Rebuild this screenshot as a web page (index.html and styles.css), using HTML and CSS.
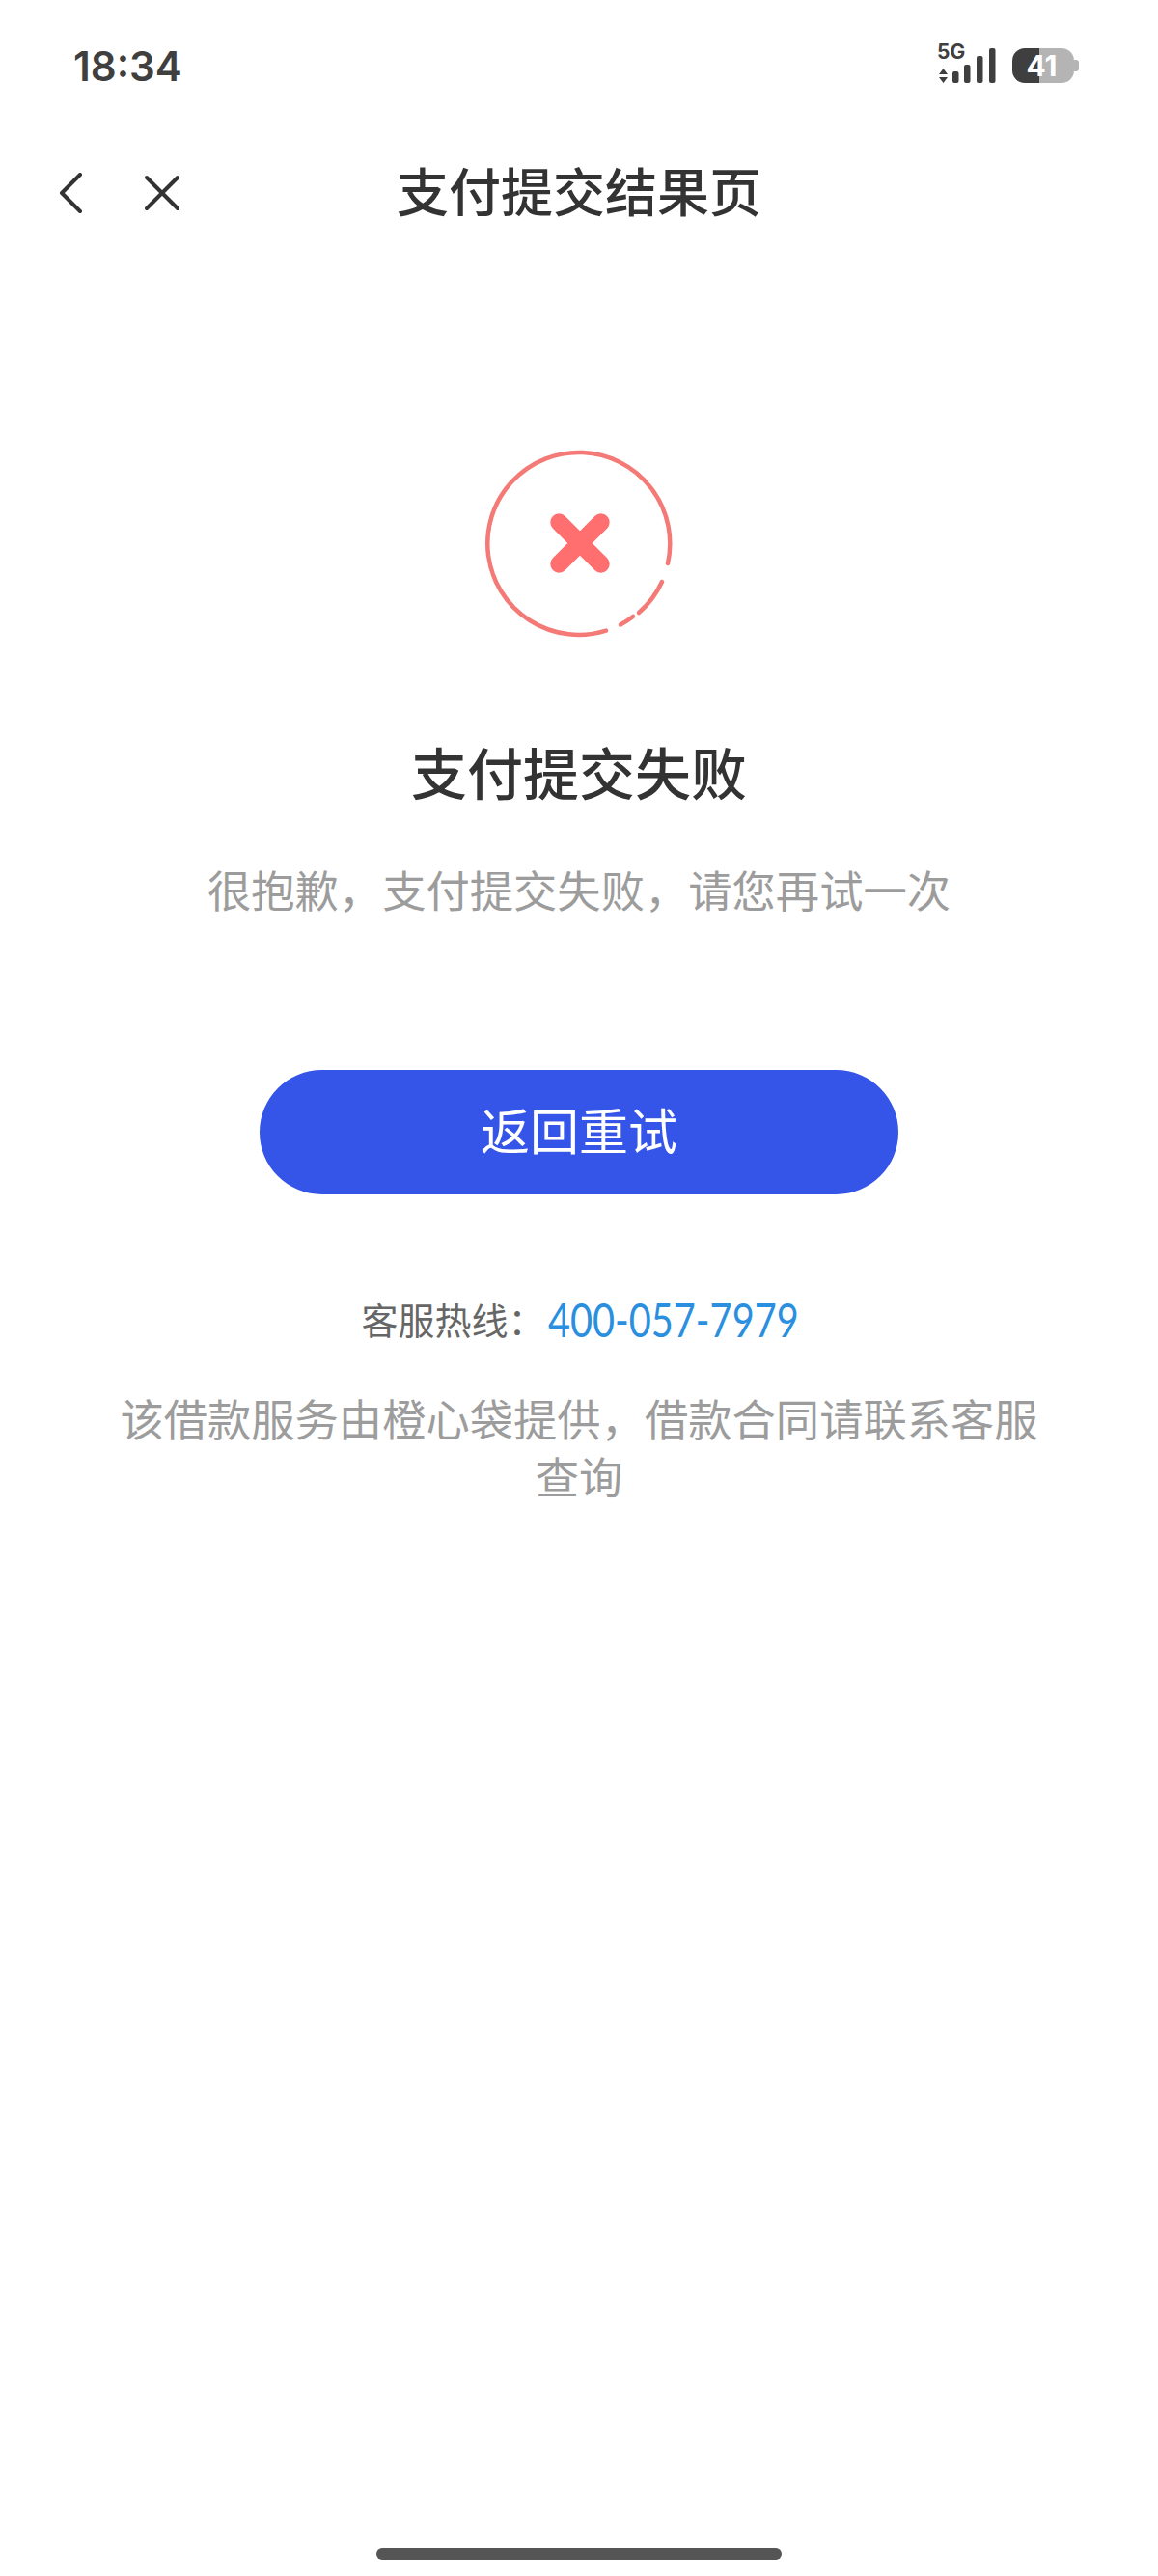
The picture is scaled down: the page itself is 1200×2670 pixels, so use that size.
FILE: index.html
```html
<!DOCTYPE html>
<html lang="zh">
<head>
<meta charset="utf-8">
<title>支付提交结果页</title>
<link rel="stylesheet" href="styles.css">
</head>
<body>
<div class="page">
  <header class="status">
    <span class="time">18:34</span>
    <div class="status-right">
      <div class="signal">
        <span class="net-label">5G</span>
        <svg class="signal-svg" width="61" height="40" viewBox="0 0 61 40">
          <g fill="#3f3f3f">
            <path d="M6.5 25 11 31H2Z M6.5 40 11 34H2Z"/>
            <rect x="16" y="28" width="6.5" height="12" rx="2"/>
            <rect x="28" y="21" width="6.5" height="19" rx="2"/>
            <rect x="41" y="12" width="6.5" height="28" rx="2"/>
            <rect x="54" y="4" width="6.5" height="36" rx="2"/>
          </g>
        </svg>
      </div>
      <div class="battery"><span class="battery-num">41</span></div>
      <span class="battery-cap"></span>
    </div>
  </header>
  <nav class="nav">
    <div class="nav-icons">
      <svg width="28" height="42" viewBox="0 0 28 42"><path d="M23 2 4 21l19 19" fill="none" stroke="#333" stroke-width="4" stroke-linecap="round" stroke-linejoin="round"/></svg>
      <svg width="40" height="40" viewBox="0 0 40 40"><path d="M4 4 36 36M36 4 4 36" fill="none" stroke="#333" stroke-width="4" stroke-linecap="round"/></svg>
    </div>
    <h1 class="nav-title">支付提交结果页</h1>
  </nav>
  <main class="result">
    <svg class="result-icon" width="200" height="200" viewBox="0 0 200 200">
      <g fill="none" stroke="#f47a78" stroke-width="4.5" stroke-linecap="round">
        <path d="M191 121A94.500 94.500 0 1 0 127 190.600"/>
        <path d="M185 140A94.500 94.500 0 0 1 161 172"/>
        <path d="M155 176A94.500 94.500 0 0 1 142 184.500"/>
      </g>
      <path d="M78.300 78.300 121.700 121.700M121.700 78.300 78.300 121.700" fill="none" stroke="#ff6f6f" stroke-width="18" stroke-linecap="round"/>
    </svg>
    <h2 class="result-title">支付提交失败</h2>
    <p class="result-sub">很抱歉，支付提交失败，请您再试一次</p>
    <button class="retry" type="button">返回重试</button>
    <p class="hotline"><span class="hotline-label">客服热线：</span><span class="phone">400-057-7979</span></p>
    <p class="note">该借款服务由橙心袋提供，借款合同请联系客服查询</p>
  </main>
  <div class="home-bar"></div>
</div>
</body>
</html>
```
FILE: styles.css
```css
* { box-sizing: border-box; }
html, body { margin: 0; padding: 0; background: #fff; }
body { font-family: "Noto Sans CJK SC", "Noto Sans", sans-serif; }
.page { width: 1200px; height: 2670px; display: flex; flex-direction: column; position: relative; background: #fff; }
.status { height: 136px; padding: 0 82px 0 76px; display: flex; justify-content: space-between; align-items: center; flex-shrink: 0; }
.time { font-family: Inter, "Liberation Sans", sans-serif; font-size: 42px; font-weight: 600; color: #3f3f3f; }
.status-right { display: flex; align-items: center; }
.signal { position: relative; width: 61px; height: 40px; margin-right: 17px; margin-top: -4px; }
.signal-svg { display: block; }
.net-label { position: absolute; left: 0; top: -5px; font-family: Inter, "Liberation Sans", sans-serif; font-size: 21px; line-height: 26px; font-weight: 700; color: #3f3f3f; }
.battery { width: 64px; height: 36px; border-radius: 13px; background: linear-gradient(90deg, #3f3f3f 28px, #b4b4b4 28px); display: flex; align-items: center; justify-content: center; padding-right: 3px; }
.battery-num { font-family: Inter, "Liberation Sans", sans-serif; font-size: 30px; line-height: 36px; font-weight: 700; color: #fff; }
.battery-cap { width: 5px; height: 12px; background: #b4b4b4; border-radius: 0 3px 3px 0; }
.nav { height: 122px; position: relative; display: flex; align-items: center; justify-content: center; flex-shrink: 0; }
.nav-icons { position: absolute; left: 60px; top: 43px; display: flex; align-items: center; gap: 60px; }
.nav-title { margin: 0; font-size: 54px; line-height: 72px; font-weight: 500; color: #333; }
.result { display: flex; flex-direction: column; align-items: center; flex: 1; padding-top: 205px; }
.result-icon { display: block; margin-left: 2px; }
.result-title { margin: 96px 0 0; font-size: 58px; line-height: 80px; font-weight: 500; color: #333; }
.result-sub { margin: 52px 0 0; font-size: 45.3px; line-height: 60px; color: #9c9c9c; }
.retry { width: 662px; height: 129px; margin-top: 158px; border: 0; border-radius: 65px; background: #3554e8; color: #fff; font: inherit; font-size: 51px; padding: 0 0 7px; }
.hotline { display: flex; align-items: center; justify-content: center; gap: 3px; width: 520px; height: 56px; margin: 101px 0 0; font-size: 38px; line-height: 56px; color: #666; }
.phone { display: inline-block; width: 258px; flex-shrink: 0; font-family: "Lato", sans-serif; font-size: 49px; line-height: 56px; white-space: nowrap; color: #2b8fe0; transform: scaleX(0.81); transform-origin: left center; }
.note { width: 960px; margin: 44px 0 0; text-align: center; font-size: 45.3px; line-height: 60px; color: #9c9c9c; }
.home-bar { position: absolute; left: 390px; bottom: 17px; width: 420px; height: 12px; border-radius: 6px; background: #555; }
```
